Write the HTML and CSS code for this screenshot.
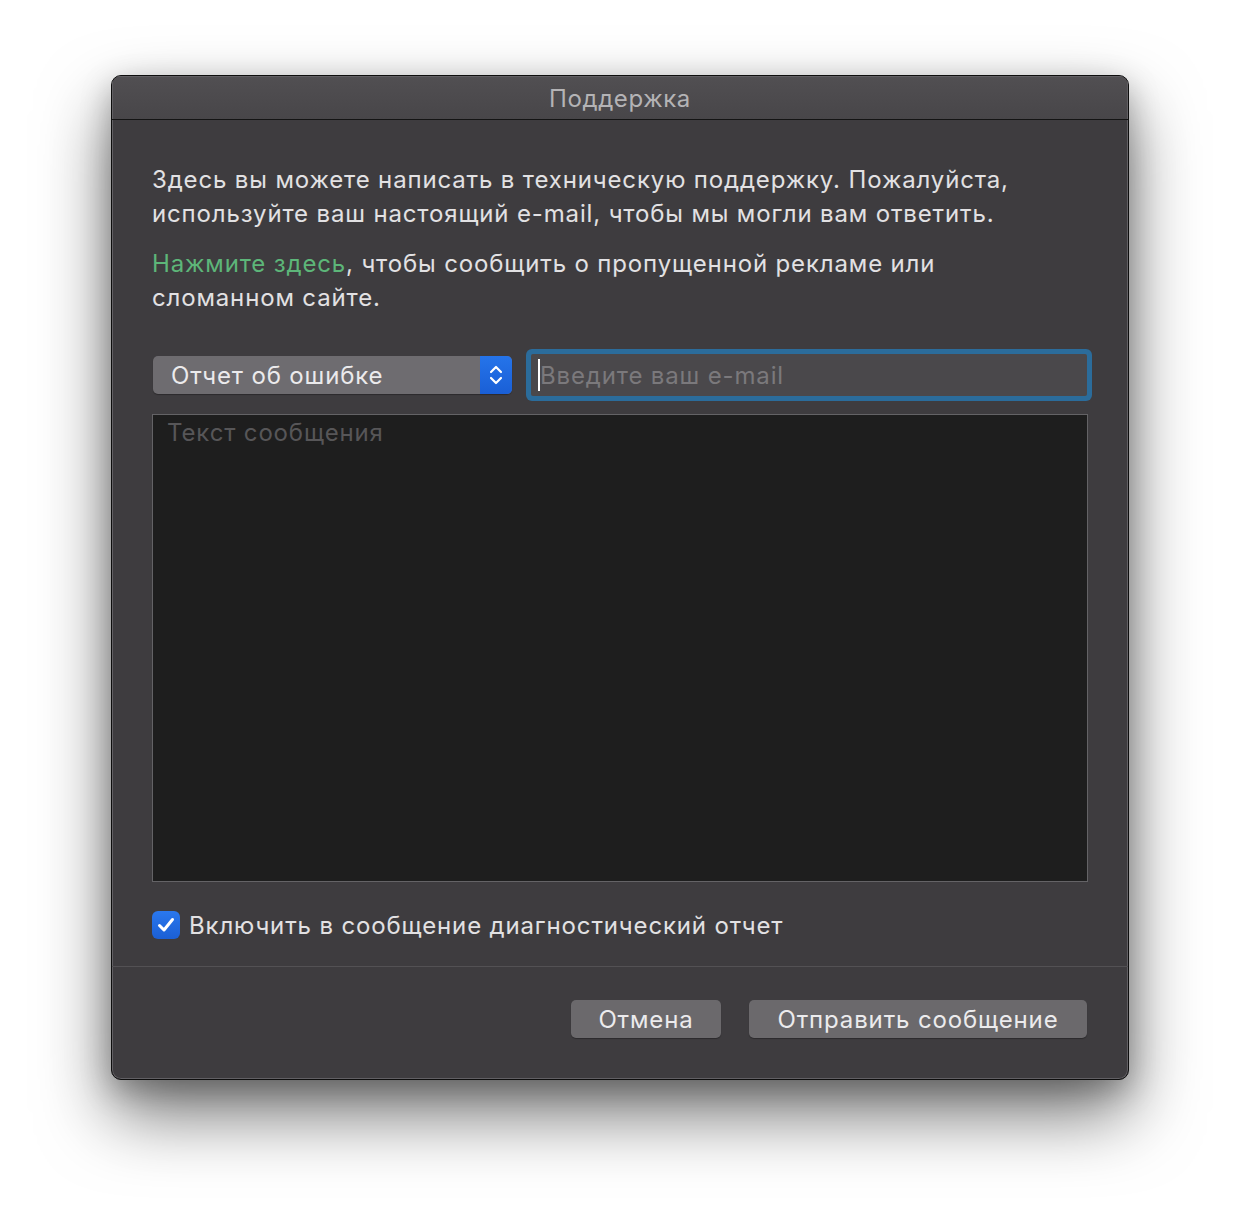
FILE: index.html
```html
<!DOCTYPE html>
<html lang="ru">
<head>
<meta charset="utf-8">
<title>Поддержка</title>
<link rel="stylesheet" href="styles.css">
</head>
<body>
<div class="window">
  <div class="titlebar">Поддержка</div>
  <div class="content">
    <p class="para">Здесь вы можете написать в техническую поддержку. Пожалуйста, используйте ваш настоящий e-mail, чтобы мы могли вам ответить.</p>
    <p class="para second"><span class="link">Нажмите здесь</span>, чтобы сообщить о пропущенной рекламе или сломанном сайте.</p>
    <div class="row">
      <div class="select">
        <span class="select-label">Отчет об ошибке</span>
        <span class="select-arrows">
          <svg width="18" height="26" viewBox="0 0 18 26"><path d="M4 10 L9 5 L14 10" fill="none" stroke="#fff" stroke-width="2.2" stroke-linecap="round" stroke-linejoin="round"/><path d="M4 16 L9 21 L14 16" fill="none" stroke="#fff" stroke-width="2.2" stroke-linecap="round" stroke-linejoin="round"/></svg>
        </span>
      </div>
      <div class="email">
        <span class="caret"></span>
        <span class="placeholder">Введите ваш e-mail</span>
      </div>
    </div>
    <div class="message"><span class="msg-placeholder">Текст сообщения</span></div>
    <div class="check-row">
      <span class="checkbox">
        <svg width="28" height="28" viewBox="0 0 28 28"><path d="M7.5 14.5 L12 19 L20.5 8.5" fill="none" stroke="#fff" stroke-width="3" stroke-linecap="round" stroke-linejoin="round"/></svg>
      </span>
      <span class="check-label">Включить в сообщение диагностический отчет</span>
    </div>
  </div>
  <div class="footer">
    <button class="btn cancel">Отмена</button>
    <button class="btn send">Отправить сообщение</button>
  </div>
</div>
</body>
</html>
```
FILE: styles.css
```css
html, body {
  margin: 0;
  padding: 0;
  background: #ffffff;
}
body {
  width: 1240px;
  height: 1228px;
  padding: 75px 0 0 111px;
  box-sizing: border-box;
  font-family: Inter, "Noto Sans", "DejaVu Sans", sans-serif;
  letter-spacing: 0.85px;
}
.window {
  width: 1018px;
  height: 1005px;
  box-sizing: border-box;
  border: 1px solid #0e0e0e;
  border-radius: 10px;
  background: #3e3c3f;
  box-shadow: inset 0 0 0 1px #626064, 0 34px 70px rgba(0,0,0,0.55), 0 10px 30px rgba(0,0,0,0.25);
  display: flex;
  flex-direction: column;
  overflow: hidden;
}
.titlebar {
  height: 43px;
  border-bottom: 1px solid #141414;
  background: linear-gradient(#514f52, #484649);
  box-shadow: inset 1px 1px 0 #626064, inset -1px 0 0 #626064;
  color: #b4b3b5;
  font-size: 24px;
  text-align: center;
  line-height: 46px;
  letter-spacing: 0.6px;
  flex: none;
}
.content {
  padding: 43px 40px 27px 40px;
  flex: none;
  border-bottom: 1px solid #535154;
}
.para {
  margin: 0;
  max-width: 880px;
  color: #e2e1e3;
  font-size: 24px;
  line-height: 34px;
}
.para.second {
  margin-top: 16px;
}
.link {
  color: #5db679;
}
.row {
  display: flex;
  align-items: center;
  margin-top: 39px;
  height: 42px;
}
.select {
  margin-left: 1px;
  width: 359px;
  height: 38px;
  border-radius: 5px;
  background: #6e6c70;
  display: flex;
  align-items: center;
  overflow: hidden;
  box-shadow: 0 1px 1px rgba(0,0,0,0.3);
}
.select-label {
  flex: 1;
  padding-left: 18px;
  color: #ebeaec;
  font-size: 24px;
}
.select-arrows {
  width: 32px;
  height: 38px;
  background: linear-gradient(#2574ea, #1a5fd6);
  display: flex;
  align-items: center;
  justify-content: center;
}
.email {
  margin-left: 19px;
  width: 556px;
  height: 42px;
  box-sizing: border-box;
  background: #4a484b;
  border-radius: 2px;
  box-shadow: 0 0 0 5px #2b6c9b;
  display: flex;
  align-items: center;
  padding-left: 7px;
}
.caret {
  width: 2px;
  height: 32px;
  background: #ffffff;
  flex: none;
}
.placeholder {
  color: #7b797c;
  font-size: 24px;
}
.message {
  margin-top: 18px;
  height: 468px;
  box-sizing: border-box;
  border: 1px solid #646366;
  background: #1e1e1e;
  padding: 3px 14px;
}
.msg-placeholder {
  color: #575658;
  font-size: 24px;
  line-height: 30px;
}
.check-row {
  margin-top: 29px;
  display: flex;
  align-items: center;
  height: 28px;
}
.checkbox {
  width: 28px;
  height: 28px;
  border-radius: 6px;
  background: linear-gradient(#2a78ee, #1b5fd4);
  display: flex;
  flex: none;
}
.check-label {
  margin-left: 9px;
  color: #e2e1e3;
  font-size: 24px;
}
.footer {
  flex: 1;
  display: flex;
  justify-content: flex-end;
  align-items: flex-start;
  padding: 33px 41px 0 0;
  gap: 28px;
}
.btn {
  height: 38px;
  border: none;
  border-radius: 5px;
  background: #6b696c;
  color: #ecebed;
  font-family: inherit;
  font-size: 24px;
  letter-spacing: 0.85px;
  padding: 0;
  box-shadow: 0 1px 1px rgba(0,0,0,0.3);
}
.btn.cancel { width: 150px; }
.btn.send { width: 338px; }
```
